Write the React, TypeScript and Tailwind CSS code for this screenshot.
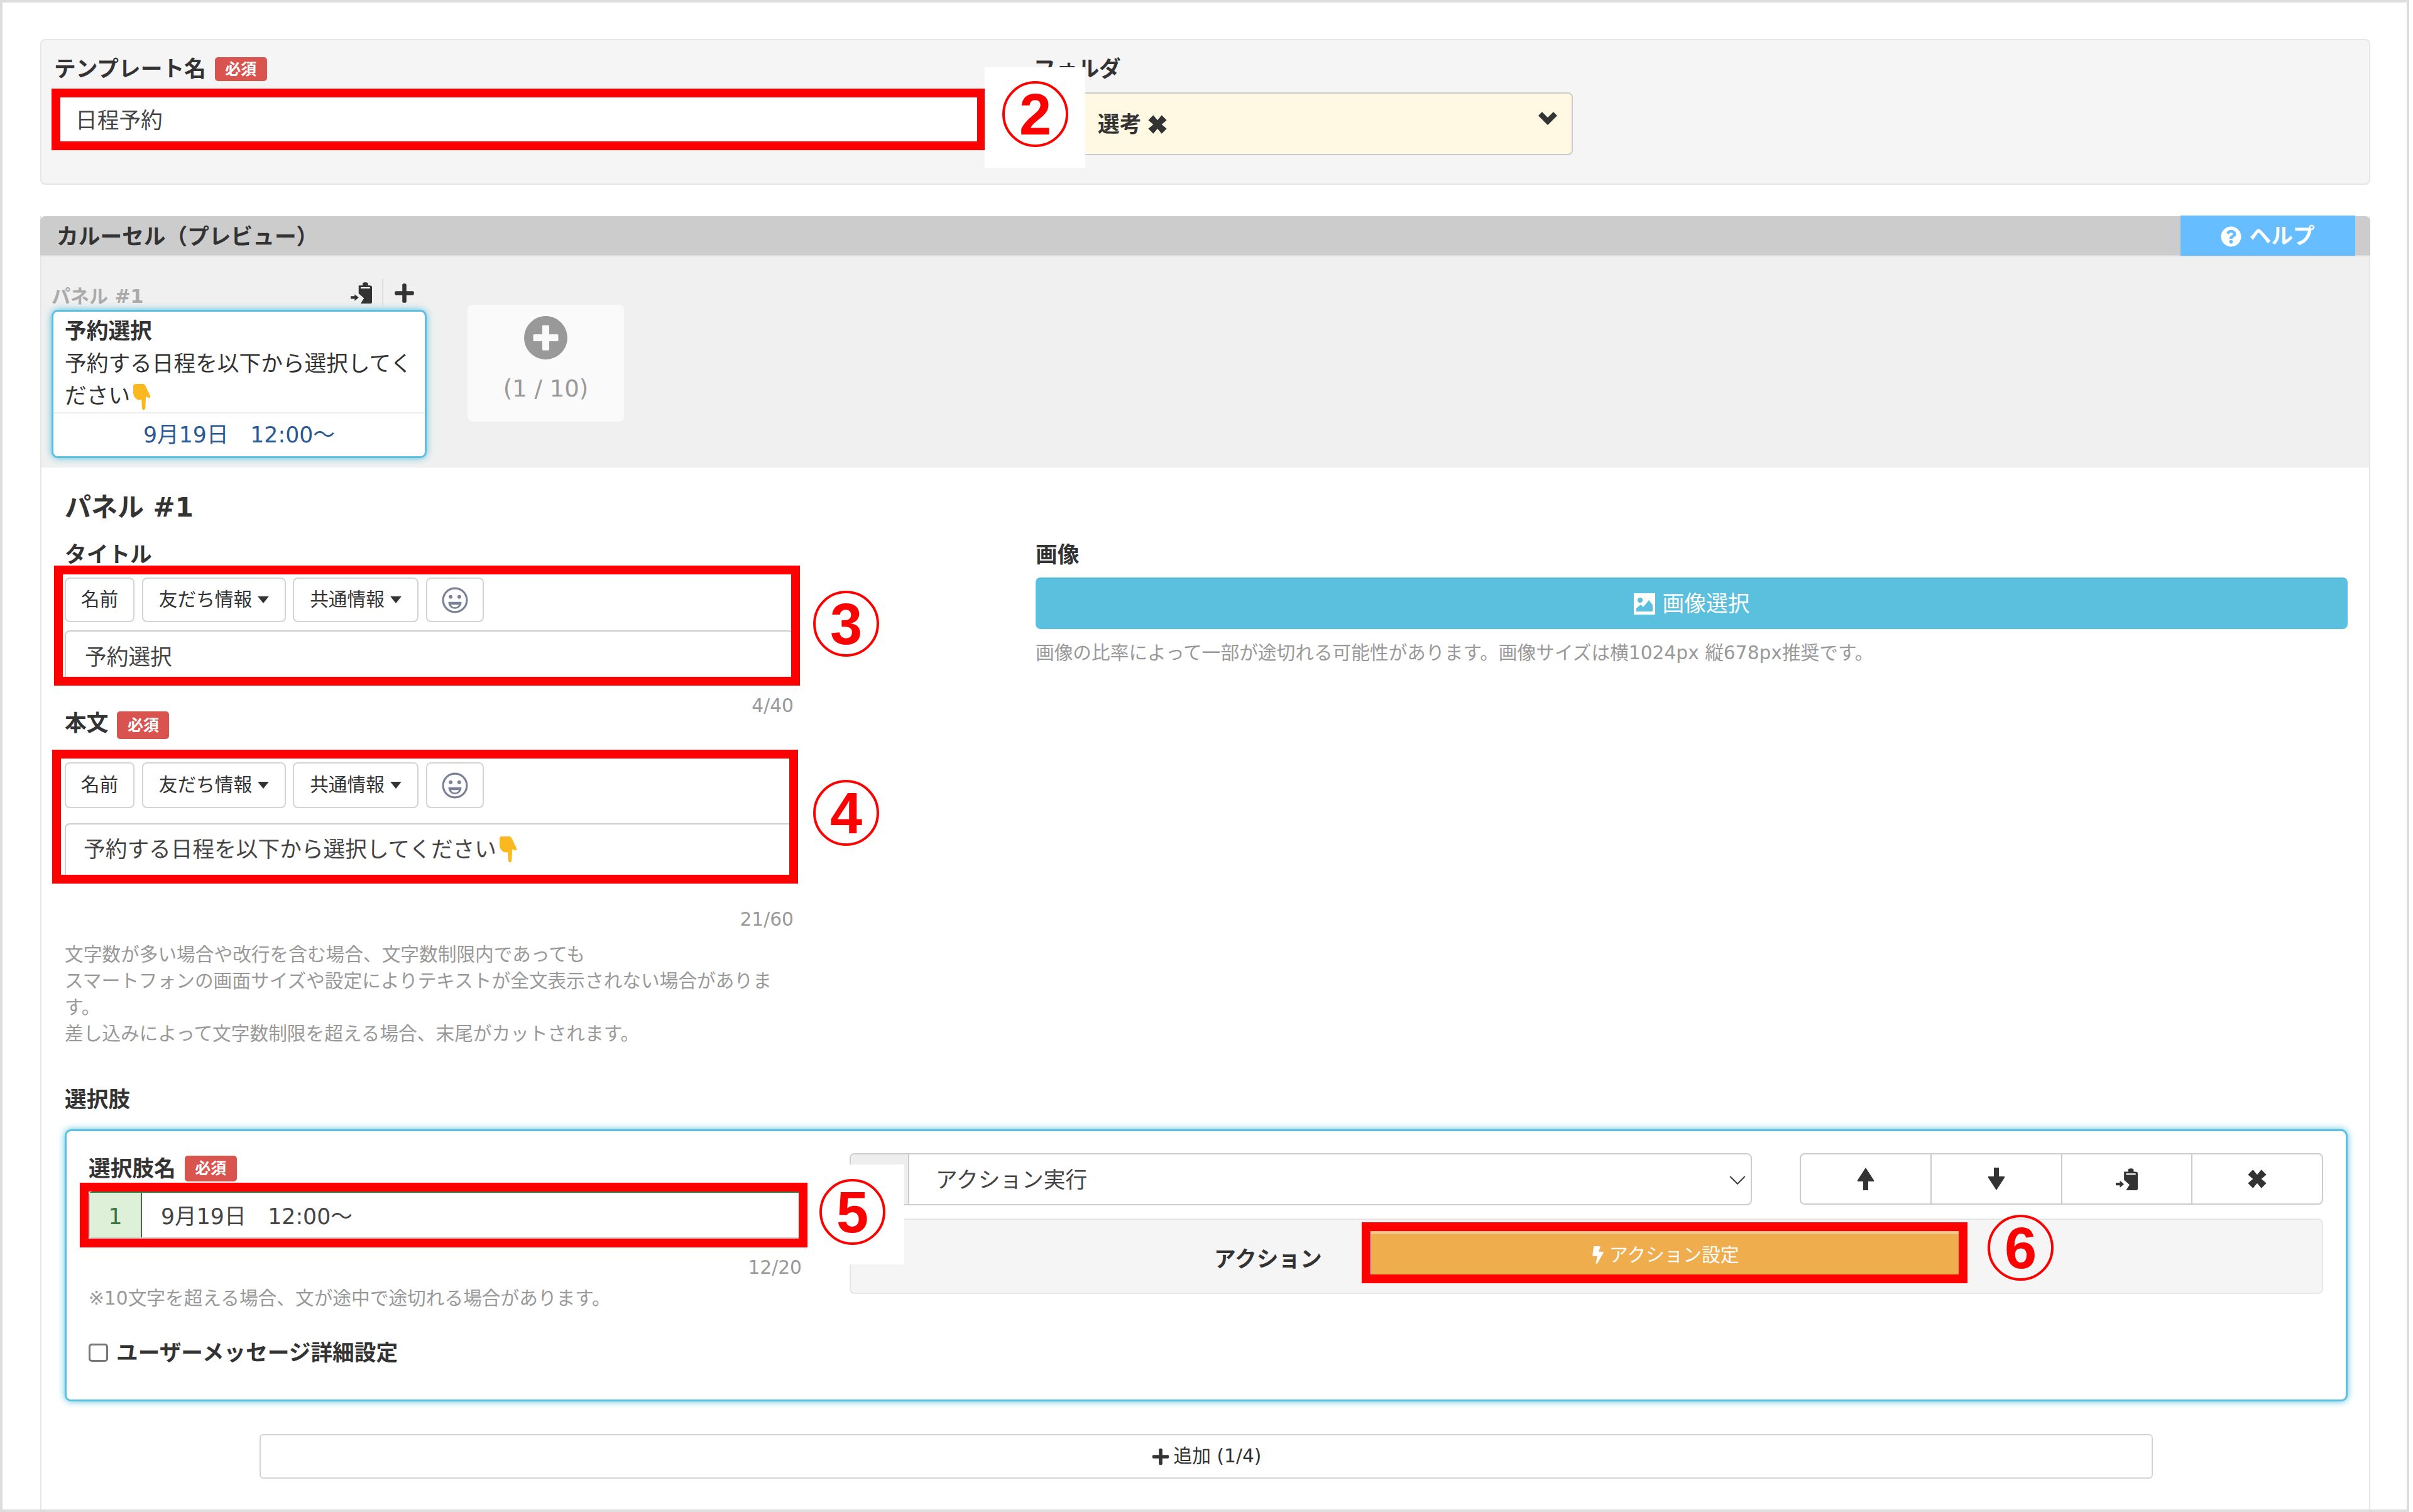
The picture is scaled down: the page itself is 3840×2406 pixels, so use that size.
import type { ReactNode } from 'react';
import { FaBolt, FaPlus, FaPlusCircle, FaQuestionCircle } from 'react-icons/fa';

// red frame drawn over a piece of the form
const RedFrame = ({ className }: { className: string }) => (
  <div className={`absolute border-[14px] border-[#ff0000] pointer-events-none ${className}`} />
);

// numbered circle drawn over the form
const Num = ({ n, className }: { n: string; className: string }) => (
  <div
    className={`absolute w-[105px] h-[105px] rounded-full border-[4px] border-[#ff0000] flex items-center justify-center text-[#ff0000] text-[92px] font-bold font-['Liberation_Sans',sans-serif] leading-none ${className}`}
  >
    {n}
  </div>
);

const Badge = ({ h }: { h: string }) => (
  <span className={`ml-[14px] w-[83px] ${h} rounded-[5px] bg-[#d9534f] text-white text-[25px] font-bold flex items-center justify-center leading-none`}>
    必須
  </span>
);

const Label = ({ children }: { children: ReactNode }) => (
  <div className="text-[34.7px] leading-[48px] font-bold text-[#333]">{children}</div>
);

const ToolButton = ({ children, className }: { children: ReactNode; className: string }) => (
  <div className={`h-full border-2 border-[#d4d4d4] rounded-[8px] bg-white flex items-center justify-center text-[29.7px] text-[#333] ${className}`}>
    {children}
  </div>
);

const Caret = () => (
  <svg viewBox="0 0 16 10" className="w-[18px] h-[11px] ml-[9px]">
    <path d="M0 0h16L8 10z" fill="#333" />
  </svg>
);

const Smile = () => (
  <svg viewBox="0 0 40 40" className="w-[42px] h-[42px]">
    <circle cx="20" cy="20" r="18" fill="none" stroke="#7b8099" strokeWidth="3" />
    <circle cx="13.5" cy="15" r="2.8" fill="#7b8099" />
    <circle cx="26.5" cy="15" r="2.8" fill="#7b8099" />
    <path d="M10 22.5h20c0 6-4 10.5-10 10.5s-10-4.500-10-10.500z" fill="#7b8099" />
    <path d="M14 27h12c-1 2.500-3 3.800-6 3.800s-5-1.300-6-3.800z" fill="#fff" />
  </svg>
);

const Toolbar = ({ h }: { h: string }) => (
  <div className={`flex ${h}`}>
    <ToolButton className="w-[111px]">名前</ToolButton>
    <ToolButton className="w-[229px] ml-[12px]">
      友だち情報
      <Caret />
    </ToolButton>
    <ToolButton className="w-[200px] ml-[11px]">
      共通情報
      <Caret />
    </ToolButton>
    <ToolButton className="w-[92px] ml-[12px]">
      <Smile />
    </ToolButton>
  </div>
);

const Hand = ({ className }: { className: string }) => (
  <svg viewBox="0 0 32 48" className={`inline-block ml-[4px] ${className}`}>
    <path
      d="M4 0h13c3 0 5 2 6 5l8 17c1 2-1 4-3 3l-5-2-1 21c0 4-6 4-6 0l-1-16c-1 1-2 1-3 1C6 29 0 24 0 15V4c0-2 2-4 4-4z"
      fill="#fbb81f"
    />
  </svg>
);

const PasteIcon = ({ className }: { className: string }) => (
  <svg viewBox="0 0 32 32" className={className}>
    <path d="M12 5h6V2c0-2.500 8-2.500 8 0v3h3c2 0 3 1 3 3v22c0 1-1 2-2 2H15l5-8-8-7V8c0-2 0-3 0-3z" fill="#333" />
    <path d="M15 7.500h14v2H15z" fill="#fff" />
    <path d="M0 21h6v-3l6 5-6 5v-3H0z" fill="#333" />
  </svg>
);

const XIcon = ({ className }: { className: string }) => (
  <svg viewBox="0 0 24 24" className={className}>
    <path d="M7 1l5 6 5-6 6 6-6 5 6 5-6 6-5-6-5 6-6-6 6-5-6-5z" fill="#333" />
  </svg>
);

const ChevronIcon = ({ className }: { className: string }) => (
  <svg viewBox="0 0 32 22" className={className}>
    <path d="M1 7l6-6 9 9 9-9 6 6-15 15z" fill="#333" />
  </svg>
);

const PictureIcon = () => (
  <svg viewBox="0 0 34 34" className="w-[34px] h-[34px] mr-[12px]">
    <rect x="0" y="0" width="34" height="34" fill="#fff" />
    <circle cx="10" cy="11" r="4" fill="#5bc0de" />
    <path d="M4 29v-5l7-6 4 4 9-11 6 8v10z" fill="#5bc0de" />
  </svg>
);

const ArrowUp = () => (
  <svg viewBox="0 0 26 36" className="w-[26px] h-[36px]">
    <path d="M13 0l13 20v2h-9v14H9V22H0v-2z" fill="#333" />
  </svg>
);

const ArrowDown = () => (
  <svg viewBox="0 0 26 36" className="w-[26px] h-[36px]">
    <path d="M13 36L0 16v-2h9V0h8v14h9v2z" fill="#333" />
  </svg>
);

const ChoiceButton = ({ children, last }: { children: ReactNode; last?: boolean }) => (
  <div className={`flex-1 flex items-center justify-center ${last ? '' : 'border-r-2 border-[#ccc]'}`}>{children}</div>
);

const App = () => {
  return (
    <div className="relative w-[3834px] h-[2406px] border-[4px] border-[#dddddd] bg-white flex flex-col pl-[60px] pr-[58px] pt-[58px] font-['DejaVu_Sans','Noto_Sans_CJK_JP',sans-serif] text-[#333] overflow-hidden">
      {/* template name + folder */}
      <div className="h-[232px] shrink-0 border-2 border-[#e6e6e6] rounded-[8px] bg-[#f5f5f5] pl-[16px] pt-[22px] flex">
        <div className="w-[1487px]">
          <div className="flex items-center h-[48px] pl-[4px]">
            <Label>テンプレート名</Label>
            <Badge h="h-[38px]" />
          </div>
          <div className="mt-[7px] h-[98px] border-[14px] border-[#ff0000] bg-white flex items-center pl-[24px] pt-[5px] text-[34.7px] text-[#444]">
            日程予約
          </div>
        </div>
        <div className="ml-[76px] w-[858px]">
          <Label>フォルダ</Label>
          <div className="mt-[13px] h-[100px] border-2 border-[#cccccc] rounded-[8px] bg-[#fff9e3] flex items-center justify-between pl-[100px] pr-[22px]">
            <span className="flex items-center text-[34.7px] font-bold text-[#333] pt-[2px]">
              選考
              <XIcon className="ml-[10px] w-[32px] h-[32px]" />
            </span>
            <ChevronIcon className="w-[32px] h-[22px] -mt-[18px]" />
          </div>
        </div>
      </div>
      <div className="absolute left-[1563px] top-[103px] w-[160px] h-[160px] bg-white" />
      <Num n="2" className="left-[1591px] top-[125px]" />

      {/* carousel */}
      <div className="mt-[50px] flex-1 border-x-2 border-[#e6e6e6] flex flex-col">
        <div className="h-[64px] shrink-0 bg-[#cccccc] rounded-t-[8px] border-b-2 border-[#dddddd] -mx-[2px] flex items-center justify-between pl-[26px] pr-[24px]">
          <span className="text-[34.7px] font-bold text-[#333] mt-[5px]">カルーセル（プレビュー）</span>
          <div className="w-[278px] h-[64px] bg-[#66bdff] text-white text-[34.7px] font-bold flex items-center justify-center pt-[3px]">
            <FaQuestionCircle className="w-[33px] h-[33px] mr-[12px]" />
            ヘルプ
          </div>
        </div>

        <div className="h-[336px] shrink-0 bg-[#f0f0f0] pl-[16px] pt-[36px] flex items-start">
          <div className="w-[597px]">
            <div className="h-[44px] flex items-center justify-between">
              <span className="text-[30px] font-bold text-[#aaaaaa] mt-[11px]">パネル #1</span>
              <div className="flex items-center h-full pr-[18px]">
                <PasteIcon className="w-[34px] h-[34px] mr-[16px]" />
                <div className="w-[2px] h-full bg-[#dddddd]" />
                <FaPlus className="w-[35px] h-[35px] ml-[16px]" />
              </div>
            </div>
            <div className="mt-[5px] w-[597px] h-[236px] border-[3px] border-[#5bc0de] rounded-[10px] bg-white shadow-[0_0_12px_#5bc0de] flex flex-col">
              <div className="h-[160px] pl-[18px] pr-[16px] pt-[4px] text-[34.7px] leading-[51px] text-[#333]">
                <div className="font-bold leading-[54px]">予約選択</div>
                <div>
                  予約する日程を以下から選択してください
                  <Hand className="w-[30px] h-[42px] align-middle" />
                </div>
              </div>
              <div className="flex-1 border-t-2 border-[#eeeeee] flex items-center justify-center text-[34.7px] text-[#2a5a95]">
                9月19日　12:00〜
              </div>
            </div>
          </div>
          <div className="ml-[65px] mt-[41px] w-[249px] h-[186px] rounded-[8px] bg-[#fafafa] flex flex-col items-center pt-[17px]">
            <FaPlusCircle className="w-[71px] h-[71px] text-[#999999]" />
            <span className="mt-[22px] text-[37px] leading-[48px] text-[#999999]">(1 / 10)</span>
          </div>
        </div>

        <div className="pl-[37px] pr-[34px]">
          <div className="pt-[34px] text-[42px] leading-[60px] font-bold text-[#333]">パネル #1</div>
          <div className="flex mt-[21px]">
            <div className="w-[1160px] shrink-0">
              <Label>タイトル</Label>
              <div className="relative mt-[12px]">
                <Toolbar h="h-[71px]" />
                <div className="mt-[13px] h-[76px] border-2 border-[#cccccc] rounded-t-[8px] bg-white flex items-center pl-[30px] pt-[10px] text-[34.7px] text-[#444]">
                  予約選択
                </div>
                <RedFrame className="left-[-17px] top-[-19px] w-[1187px] h-[191px]" />
              </div>
              <div className="mt-[34px] text-right text-[29.7px] leading-[20px] text-[#999999]">4/40</div>
              <div className="flex items-center h-[44px] -translate-y-[4px]">
                <Label>本文</Label>
                <Badge h="h-[44px] mt-[6px]" />
              </div>
              <div className="relative mt-[36px]">
                <Toolbar h="h-[73px]" />
                <div className="mt-[24px] h-[84px] border-2 border-[#cccccc] rounded-t-[8px] bg-white flex items-center pl-[28px] text-[34.7px] text-[#444]">
                  予約する日程を以下から選択してください
                  <Hand className="w-[30px] h-[42px]" />
                </div>
                <RedFrame className="left-[-20px] top-[-20px] w-[1187px] h-[213px]" />
              </div>
              <div className="mt-[59px] text-right text-[29.7px] leading-[20px] text-[#999999]">21/60</div>
              <div className="mt-[25px] text-[29.7px] leading-[42px] text-[#999999] whitespace-nowrap">
                <div>文字数が多い場合や改行を含む場合、文字数制限内であっても</div>
                <div>スマートフォンの画面サイズや設定によりテキストが全文表示されない場合がありま</div>
                <div>す。</div>
                <div>差し込みによって文字数制限を超える場合、末尾がカットされます。</div>
              </div>
            </div>
            <div className="ml-[385px] flex-1">
              <Label>画像</Label>
              <div className="mt-[12px] h-[82px] rounded-[8px] bg-[#5bc0de] border-t-2 border-[#46b8da] flex items-center justify-center text-white text-[34.7px]">
                <PictureIcon />
                画像選択
              </div>
              <div className="mt-[18px] text-[29.7px] leading-[40px] text-[#999999]">
                画像の比率によって一部が途切れる可能性があります。画像サイズは横1024px 縦678px推奨です。
              </div>
            </div>
          </div>

          <div className="mt-[60px]">
            <Label>選択肢</Label>
          </div>
          <div className="relative mt-[23px] h-[433px] border-[3px] border-[#5bc0de] rounded-[10px] shadow-[0_0_12px_#5bc0de] bg-white flex pl-[35px] pr-[36px] pt-[35px]">
            <div className="w-[1135px] shrink-0 pt-[6px]">
              <div className="flex items-center h-[41px] -translate-y-[2px]">
                <Label>選択肢名</Label>
                <Badge h="h-[41px]" />
              </div>
              <div className="relative mt-[14px] h-[75px] flex border-2 border-[#cccccc] border-t-[#3c763d] rounded-[6px] bg-white">
                <div className="w-[83px] bg-[#dff0d8] border-r-2 border-[#3c763d] text-[#3c763d] text-[34.7px] flex items-center justify-center pt-[5px]">
                  1
                </div>
                <div className="flex-1 flex items-center pl-[30px] pt-[5px] text-[34.7px] text-[#444]">9月19日　12:00〜</div>
                <RedFrame className="left-[-16px] top-[-16px] w-[1158px] h-[103px]" />
              </div>
              <div className="mt-[36px] text-right text-[29.7px] leading-[20px] text-[#999999]">12/20</div>
              <div className="mt-[19px] text-[29.7px] leading-[40px] text-[#999999]">
                ※10文字を超える場合、文が途中で途切れる場合があります。
              </div>
              <div className="mt-[41px] flex items-center">
                <div className="w-[31px] h-[29px] border-[3px] border-[#777777] rounded-[5px] bg-white" />
                <div className="ml-[13px] mt-[2px]">
                  <Label>ユーザーメッセージ詳細設定</Label>
                </div>
              </div>
            </div>

            <div className="ml-[76px] flex-1">
              <div className="flex">
                <div className="w-[1436px] h-[83px] flex border-2 border-[#cccccc] rounded-[8px] bg-white">
                  <div className="w-[93px] bg-[#eeeeee] border-r-2 border-[#cccccc] rounded-l-[8px]" />
                  <div className="flex-1 flex items-center justify-between pl-[42px] pr-[8px] pt-[3px] text-[34.7px] text-[#444]">
                    アクション実行
                    <svg viewBox="0 0 24 14" className="w-[26px] h-[15px]">
                      <path d="M1 1l11 11L23 1" fill="none" stroke="#444" strokeWidth="2" />
                    </svg>
                  </div>
                </div>
                <div className="ml-[76px] flex-1 h-[82px] flex border-2 border-[#cccccc] rounded-[8px] bg-white">
                  <ChoiceButton>
                    <ArrowUp />
                  </ChoiceButton>
                  <ChoiceButton>
                    <ArrowDown />
                  </ChoiceButton>
                  <ChoiceButton>
                    <PasteIcon className="w-[35px] h-[35px]" />
                  </ChoiceButton>
                  <ChoiceButton last>
                    <XIcon className="w-[32px] h-[32px]" />
                  </ChoiceButton>
                </div>
              </div>
              <div className="relative mt-[21px] h-[120px] border-2 border-[#e6e6e6] rounded-[8px] bg-[#f5f5f5] flex pt-[18px] pl-[578px]">
                <div className="mt-[21px]">
                  <Label>アクション</Label>
                </div>
                <div className="ml-[78px] w-[937px] h-[69px] bg-[#f0ad4e] border-t-[5px] border-t-[#f6c78b] flex items-center justify-center text-white text-[29.7px] pt-[2px]">
                  <FaBolt className="w-[20px] h-[28px] mr-[8px]" />
                  アクション設定
                </div>
                <RedFrame className="left-[813px] top-[4px] w-[964px] h-[97px]" />
              </div>
            </div>
            <div className="absolute left-[1180px] top-[53px] w-[153px] h-[159px] bg-white" />
            <Num n="5" className="left-[1198px] top-[76px]" />
            <Num n="6" className="left-[3057px] top-[133px]" />
          </div>

          <div className="mt-[52px] mx-[310px] h-[71px] border-2 border-[#d4d4d4] rounded-[6px] bg-white flex items-center justify-center text-[29.7px] text-[#333]">
            <FaPlus className="w-[30px] h-[30px] mr-[6px]" />
            追加 (1/4)
          </div>
        </div>
      </div>

      <Num n="3" className="left-[1290px] top-[936px]" />
      <Num n="4" className="left-[1290px] top-[1237px]" />
    </div>
  );
};

export default App;
